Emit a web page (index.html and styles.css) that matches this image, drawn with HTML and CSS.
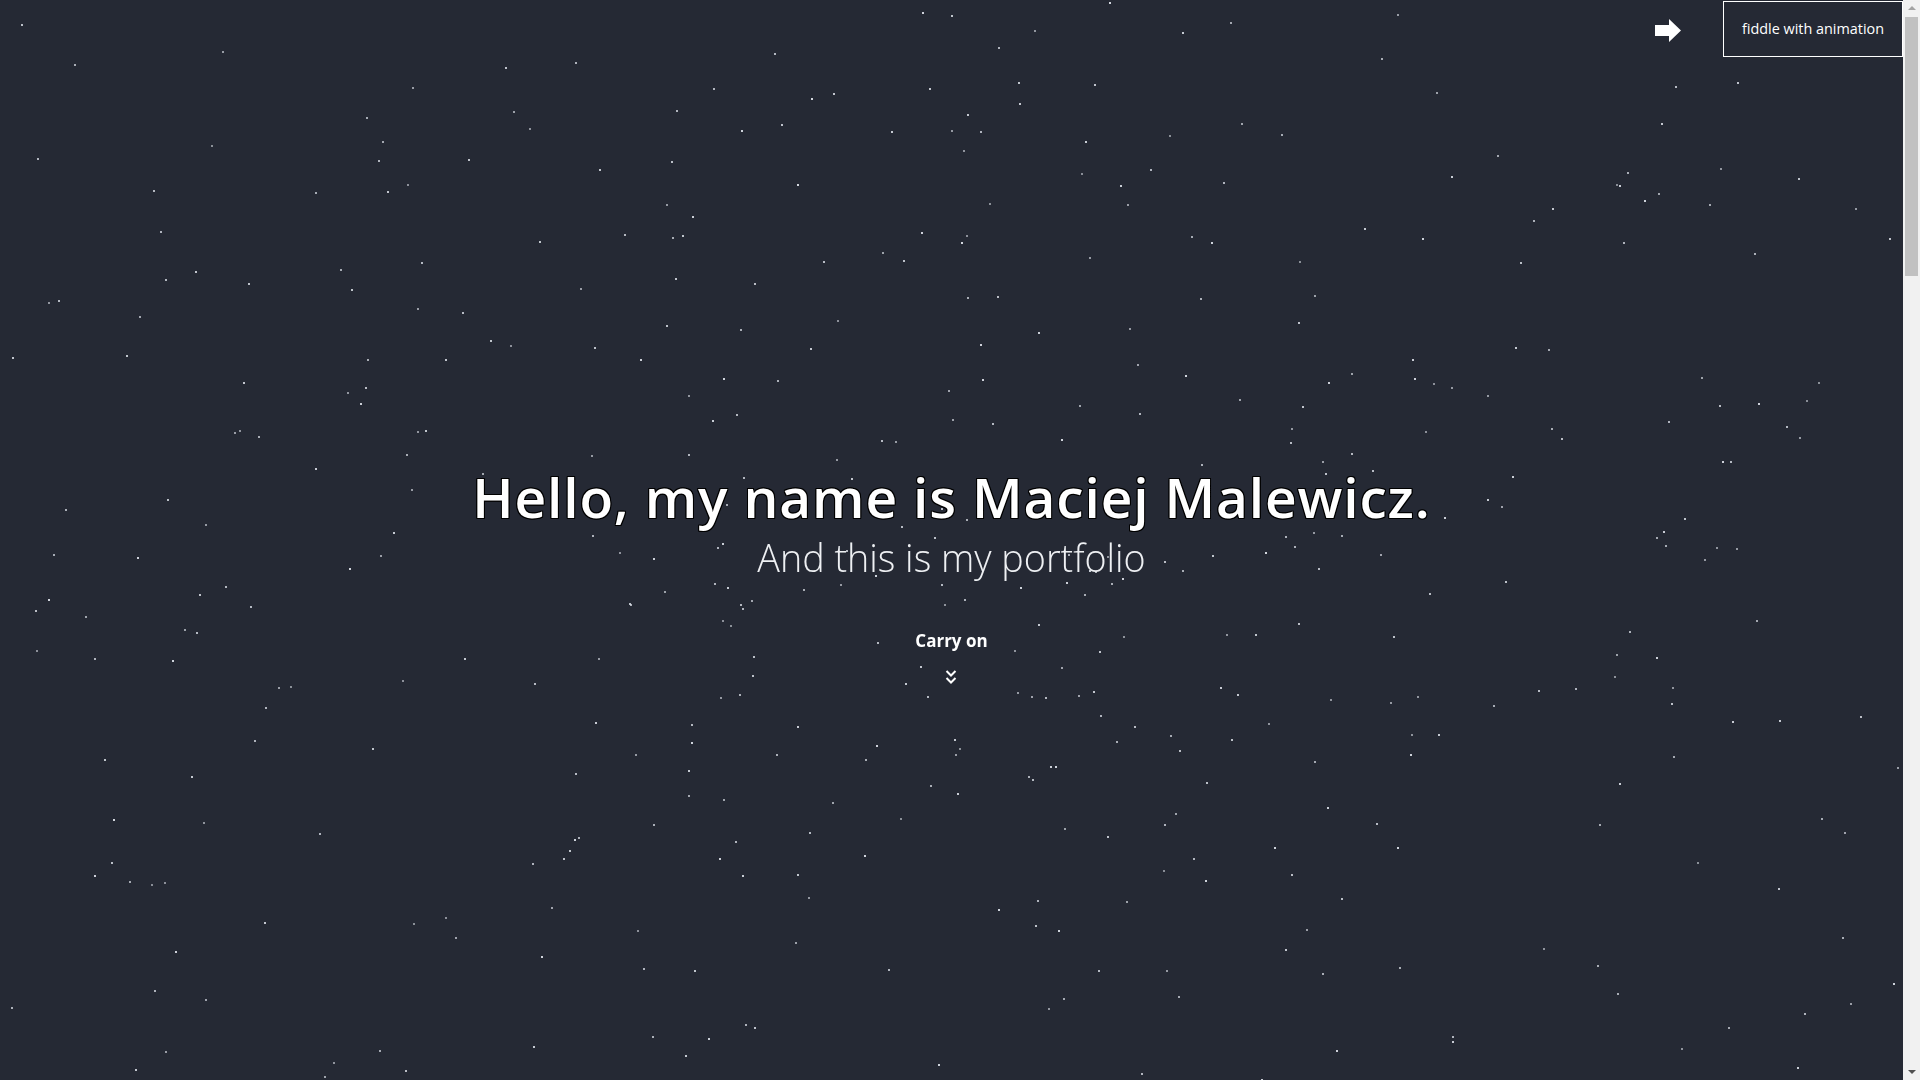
FILE: index.html
```html
<!DOCTYPE html>
<html lang="en">
<head>
<meta charset="utf-8">
<title>Maciej Malewicz - Portfolio</title>
<link rel="stylesheet" href="styles.css">
</head>
<body>
<canvas id="stars" class="stars"></canvas>
<header class="topbar">
  <a class="topbar__arrow" href="#" aria-label="next">
    <svg width="26" height="23" viewBox="0 0 26 23"><polygon points="0,6 14,6 14,0 26,11.5 14,23 14,17 0,17" fill="#ffffff"/></svg>
  </a>
  <button class="topbar__btn">fiddle with animation</button>
</header>
<main class="page">
  <section class="hero">
    <h1 class="hero__title">Hello, my name is Maciej Malewicz.</h1>
    <p class="hero__subtitle">And this is my portfolio</p>
    <a class="hero__more" href="#about">
      <span class="hero__more-label">Carry on</span>
      <svg class="hero__chevrons" width="12" height="16" viewBox="0 0 12 16"><polyline points="1.5,2 6,6.5 10.5,2" fill="none" stroke="#fff" stroke-width="2"/><polyline points="1.5,9 6,13.5 10.5,9" fill="none" stroke="#fff" stroke-width="2"/></svg>
    </a>
  </section>
  <section class="rest" id="about"></section>
</main>
<div class="vscroll" aria-hidden="true">
  <span class="vscroll__up"></span>
  <span class="vscroll__thumb"></span>
  <span class="vscroll__down"></span>
</div>
<script src="script.js"></script>
</body>
</html>
```

FILE: styles.css
```css
html, body {
  margin: 0;
  padding: 0;
}
body {
  background: #252934;
  font-family: "Open Sans", "Noto Sans", sans-serif;
  color: #ffffff;
}
.stars {
  position: fixed;
  left: 0;
  top: 0;
  z-index: 0;
  display: block;
}
.topbar {
  position: fixed;
  top: 0;
  right: 17px;
  z-index: 2;
  display: flex;
  align-items: flex-start;
}
.topbar__arrow {
  display: block;
  margin-top: 19px;
  margin-right: 42px;
  line-height: 0;
}
.topbar__btn {
  margin-top: 1px;
  width: 180px;
  height: 56px;
  background: #252934;
  border: 1px solid #ffffff;
  color: #ffffff;
  font-family: "Open Sans", sans-serif;
  font-size: 14.4px;
  padding: 0 0 2px;
  cursor: pointer;
}
.page {
  position: relative;
  z-index: 1;
  margin-right: 17px;
}
.hero {
  height: 1080px;
  box-sizing: border-box;
  padding-top: 464px;
  display: flex;
  flex-direction: column;
  align-items: center;
}
.hero__title {
  margin: 0;
  font-size: 55px;
  font-weight: 600;
  line-height: 66px;
  letter-spacing: 0.85px;
  text-shadow: 1px 1px 0 #000, -1px -1px 0 #000, 1px -1px 0 #000, -1px 1px 0 #000, 0 1px 0 #000, 0 -1px 0 #000, 1px 0 0 #000, -1px 0 0 #000;
}
.hero__subtitle {
  margin: 5px 0 0;
  font-size: 37.7px;
  font-weight: 300;
  line-height: 45px;
  color: #eef0f3;
}
.hero__more {
  margin-top: 50px;
  display: flex;
  flex-direction: column;
  align-items: center;
  color: #ffffff;
  text-decoration: none;
}
.hero__more-label {
  font-size: 17px;
  font-weight: 700;
  line-height: 22px;
}
.hero__chevrons {
  margin-top: 17px;
}
.rest {
  height: 3300px;
}
.vscroll {
  position: fixed;
  top: 0;
  right: 0;
  width: 17px;
  height: 100vh;
  z-index: 3;
  background: #f1f1f1;
  display: flex;
  flex-direction: column;
  align-items: center;
}
.vscroll__up {
  margin-top: 6px;
  width: 0;
  height: 0;
  border-left: 4px solid transparent;
  border-right: 4px solid transparent;
  border-bottom: 4px solid #a3a3a3;
}
.vscroll__thumb {
  margin-top: 7px;
  width: 13px;
  height: 259px;
  background: #c1c1c1;
}
.vscroll__down {
  margin-top: auto;
  margin-bottom: 6px;
  width: 0;
  height: 0;
  border-left: 4px solid transparent;
  border-right: 4px solid transparent;
  border-top: 4px solid #505050;
}
```

FILE: script.js
```js
(function () {
  var c = document.getElementById('stars');
  var w = document.documentElement.clientWidth - 17;
  var h = window.innerHeight;
  c.width = w; c.height = h;
  c.style.width = w + 'px'; c.style.height = h + 'px';
  var ctx = c.getContext('2d');
  var s = 20240611;
  function rnd() {
    s |= 0; s = s + 0x6D2B79F5 | 0;
    var t = Math.imul(s ^ s >>> 15, 1 | s);
    t = t + Math.imul(t ^ t >>> 7, 61 | t) ^ t;
    return ((t ^ t >>> 14) >>> 0) / 4294967296;
  }
  function gauss() {
    var u = rnd() || 1e-6, v = rnd();
    return Math.sqrt(-2 * Math.log(u)) * Math.cos(2 * Math.PI * v);
  }
  var cx = w / 2, cy = h / 2;
  var stars = [];
  for (var i = 0; i < 210; i++) stars.push([rnd() * w, rnd() * h]);
  for (var j = 0; j < 280; j++) stars.push([cx + gauss() * 400, cy + gauss() * 290]);
  for (var k = 0; k < stars.length; k++) {
    var x = Math.round(stars[k][0]), y = Math.round(stars[k][1]);
    if (x < 0 || y < 0 || x > w || y > h) continue;
    var a = 0.55 + rnd() * 0.4;
    ctx.fillStyle = 'rgba(220,224,232,' + a.toFixed(2) + ')';
    ctx.fillRect(x, y, 2, 2);
  }
})();
```
